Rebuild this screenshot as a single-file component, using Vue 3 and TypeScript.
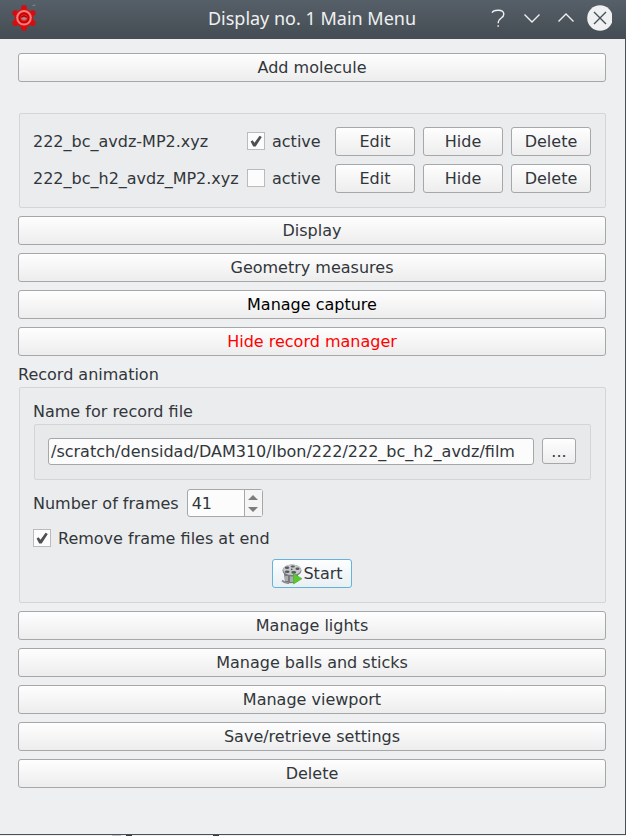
<script setup lang="ts">
import { ref } from 'vue'

interface Molecule {
  name: string
  active: boolean
}

const molecules = ref<Molecule[]>([
  { name: '222_bc_avdz-MP2.xyz', active: true },
  { name: '222_bc_h2_avdz_MP2.xyz', active: false },
])
const actions: string[] = ['Edit', 'Hide', 'Delete']
const upperMenu = [
  { label: 'Display', tone: '' },
  { label: 'Geometry measures', tone: '' },
  { label: 'Manage capture', tone: 'black' },
  { label: 'Hide record manager', tone: 'red' },
]
const lowerMenu: string[] = [
  'Manage lights',
  'Manage balls and sticks',
  'Manage viewport',
  'Save/retrieve settings',
  'Delete',
]
const recordFile = ref('/scratch/densidad/DAM310/Ibon/222/222_bc_h2_avdz/film')
const frames = ref(41)
const removeFrames = ref(true)
const knobs: number[] = [0, 60, 120, 180, 240, 300]
</script>

<template>
  <div class="window">
    <header class="titlebar">
      <svg class="app-icon" width="28" height="28" viewBox="0 0 28 28">
        <g fill="#d01010">
          <circle v-for="a in knobs" :key="a" cx="14" cy="3.9" r="2.9" :transform="`rotate(${a} 14 14)`" />
        </g>
        <circle cx="14" cy="14" r="9.3" fill="#e20a0a" />
        <circle cx="14" cy="13.8" r="6.8" fill="none" stroke="#ff7c7c" stroke-width="2" />
        <circle cx="14" cy="13.8" r="4.4" fill="#f02424" stroke="#b80606" stroke-width="1.5" />
        <ellipse cx="14" cy="14.6" rx="2.8" ry="1.3" fill="#a9898c" />
        <path d="M11.3 13.2Q14 10.6 16.7 13.2" fill="none" stroke="#a00000" stroke-width="1.2" />
        <path d="M22.5 1.6L25.5 1" stroke="#77868e" stroke-width="1.2" />
      </svg>
      <h1 class="title">Display no. 1 Main Menu</h1>
      <svg class="controls" width="126" height="28" viewBox="0 0 126 28" fill="none" stroke="#eff0f1" stroke-width="1.4">
        <path d="M6.1 7.8C7.1 4.7 17.8 3.5 17.8 9.2C17.8 13.5 12.2 12.5 12.2 18.2" />
        <path d="M11.4 21.1h1.5" stroke-width="1.5" />
        <path d="M38.5 9.5l7.5 7.5l7.5-7.5M72.5 16.5l7.5-7.5l7.5 7.5" />
        <circle cx="114" cy="13" r="12.8" fill="#eff0f1" stroke="none" />
        <path d="M108 7l12 12M120 7l-12 12" stroke="#475057" />
      </svg>
    </header>

    <main class="content">
      <button class="btn add">Add molecule</button>

      <section class="group molecules">
        <div v-for="m in molecules" :key="m.name" class="molecule">
          <span class="name">{{ m.name }}</span>
          <label class="check">
            <span class="box" @click="m.active = !m.active">
              <svg v-if="m.active" width="16" height="16" viewBox="0 0 16 16"><path d="M2.6 8.5L4.6 7.2L6.5 9.7L11.6 2.7L13.8 4L7.7 13.4L5.2 13.5Z" fill="#4d5052" /></svg>
            </span>
            <span>active</span>
          </label>
          <div class="actions">
            <button v-for="a in actions" :key="a" class="btn small">{{ a }}</button>
          </div>
        </div>
      </section>

      <nav class="menu">
        <button v-for="item in upperMenu" :key="item.label" class="btn" :class="item.tone">{{ item.label }}</button>
      </nav>

      <h2 class="caption">Record animation</h2>
      <section class="group recorder">
        <div class="caption">Name for record file</div>
        <div class="group file">
          <div class="input">{{ recordFile }}</div>
          <button class="btn browse">...</button>
        </div>
        <div class="frames">
          <span>Number of frames</span>
          <div class="spin">
            <span class="value">{{ frames }}</span>
            <span class="arrows">
              <svg width="17" height="26" viewBox="0 0 17 26" fill="#7b7d7f">
                <path d="M3 10L8 5l5 5zM3 17l5 5l5-5z" />
              </svg>
            </span>
          </div>
        </div>
        <label class="check remove">
          <span class="box" @click="removeFrames = !removeFrames">
            <svg v-if="removeFrames" width="16" height="16" viewBox="0 0 16 16"><path d="M2.6 8.5L4.6 7.2L6.5 9.7L11.6 2.7L13.8 4L7.7 13.4L5.2 13.5Z" fill="#4d5052" /></svg>
          </span>
          <span>Remove frame files at end</span>
        </label>
        <button class="btn small start">
          <svg width="22" height="22" viewBox="0 0 22 22">
            <path d="M3 11h14v7q-6 4-13 1z" fill="#77797b" />
            <path d="M4 13h3v5H4zM9 13h4v6H9z" fill="#a9abad" />
            <path d="M1 17.5q3 3 7 2.5" fill="none" stroke="#8c8e90" stroke-width="1.8" />
            <ellipse cx="11" cy="7.6" rx="9.5" ry="6" fill="#77797d" />
            <ellipse cx="11" cy="6.7" rx="9" ry="5.2" fill="#c5c7ca" />
            <g fill="#55585e">
              <ellipse cx="6" cy="4.8" rx="2.2" ry="1.2" />
              <ellipse cx="11.8" cy="3.4" rx="2.1" ry="1" />
              <ellipse cx="16.5" cy="5.8" rx="2" ry="1.2" />
              <ellipse cx="6.2" cy="8.7" rx="2.4" ry="1.3" />
              <ellipse cx="12.7" cy="9.4" rx="2.4" ry="1.3" />
              <circle cx="10.7" cy="6.4" r=".8" />
            </g>
            <path d="M12.5 10.5l8.5 5.2l-8.5 5.3z" fill="#5bc832" stroke="#43ad26" stroke-width=".6" />
          </svg>
          <span>Start</span>
        </button>
      </section>

      <nav class="menu">
        <button v-for="label in lowerMenu" :key="label" class="btn">{{ label }}</button>
      </nav>
    </main>
    <footer class="edge"><i class="speck faint"></i><i class="speck"></i><i class="speck far"></i></footer>
  </div>
</template>

<style>
body {
  margin: 0;
  overflow: hidden;
}
</style>

<style scoped>
.window {
  box-sizing: border-box;
  width: 626px;
  height: 836px;
  display: flex;
  flex-direction: column;
  background: #eeeff1;
  color: #31363b;
  font: 16px/19px "DejaVu Sans", sans-serif;
  white-space: nowrap;
}
.titlebar {
  flex: none;
  box-sizing: border-box;
  height: 39px;
  padding: 4px 14px 7px 10px;
  display: flex;
  align-items: center;
  background: linear-gradient(#566068, #454c53);
  color: #eff0f1;
}
.app-icon,
.controls {
  flex: none;
}
.controls {
  margin-top: 2px;
}
.title {
  flex: 1;
  margin: 0 0 0 100px;
  text-align: center;
  font: 400 18px/26px "Noto Sans", sans-serif;
}
.content {
  flex: 1;
  box-sizing: border-box;
  padding: 14px 19px 0 18px;
  border-right: 1px solid #475057;
}
.btn {
  box-sizing: border-box;
  display: flex;
  align-items: center;
  justify-content: center;
  width: 100%;
  height: 29px;
  margin: 0;
  padding: 0;
  border: 1px solid #a5a7a8;
  border-radius: 3px;
  background: linear-gradient(#fefefe, #ededed);
  color: inherit;
  font: inherit;
}
.black {
  color: #000;
}
.red {
  color: #f00;
}
.group {
  box-sizing: border-box;
  border: 1px solid #d3d5d7;
  border-radius: 2px;
  background: #ebecee;
}
.molecules {
  height: 95px;
  margin: 31px 0 8px 1px;
  padding: 13px 14px 0 13px;
  display: flex;
  flex-direction: column;
  gap: 8px;
}
.molecule {
  display: flex;
  align-items: center;
}
.name {
  width: 214px;
}
.check {
  display: flex;
  align-items: flex-start;
  gap: 7px;
}
.box {
  box-sizing: border-box;
  width: 18px;
  height: 18px;
  border: 1px solid #b9bbbd;
  background: #fcfcfc;
}
.box svg {
  display: block;
}
.actions {
  display: flex;
  gap: 8px;
  margin-left: auto;
}
.small {
  width: 80px;
}
.menu {
  display: flex;
  flex-direction: column;
  gap: 8px;
}
.caption {
  margin: 9px 0 3px;
  font: inherit;
}
.recorder {
  height: 216px;
  margin: 0 0 8px 1px;
  padding: 5px 14px 0 13px;
}
.file {
  height: 56px;
  margin-left: 1px;
  padding: 13px 14px 0 13px;
  display: flex;
  align-items: flex-start;
  gap: 8px;
  background: #e8e9eb;
}
.input {
  box-sizing: border-box;
  width: 486px;
  height: 27px;
  padding: 3px 2px;
  border: 1px solid #a5a7a8;
  border-radius: 3px;
  background: #fcfcfc;
}
.browse {
  width: 34px;
  height: 26px;
}
.frames {
  display: flex;
  align-items: center;
  justify-content: flex-start;
  gap: 8px;
  margin-top: 9px;
}
.spin {
  box-sizing: border-box;
  display: flex;
  width: 76px;
  height: 28px;
  border: 1px solid #a5a7a8;
  border-radius: 3px;
  background: #fcfcfc;
}
.value {
  flex: 1;
  padding: 4px;
}
.arrows {
  border-left: 1px solid #a5a7a8;
  background: #f5f5f5;
}
.arrows svg {
  display: block;
}
.remove {
  margin-top: 12px;
}
.start {
  margin: 11px auto 0 239px;
  border-color: #63b3da;
  background: linear-gradient(#fdfeff, #e9eff3);
}
.edge {
  flex: none;
  height: 1px;
  border-top: 1px solid #475057;
  display: flex;
  background: #eeeff1;
}
.speck {
  width: 6px;
  margin-left: 5px;
  background: #343b43;
}
.faint {
  width: 9px;
  margin-left: 112px;
  background: #bec4c9;
}
.far {
  margin-left: 81px;
}
</style>
